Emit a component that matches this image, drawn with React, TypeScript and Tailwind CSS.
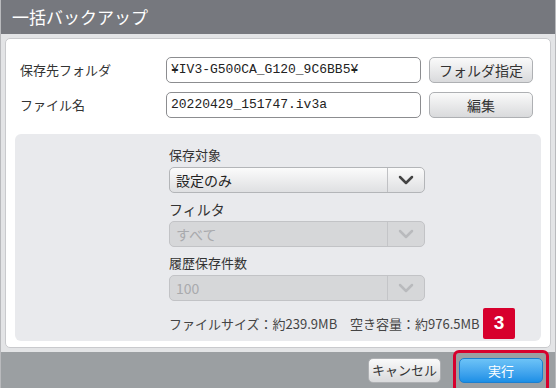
import React from 'react';

const jp = { fontFamily: '"Noto Sans CJK JP", "Noto Sans", sans-serif' };
const mono = { fontFamily: '"Liberation Mono", "Noto Sans CJK JP", monospace' };

const Chevron: React.FC<{ color: string }> = ({ color }) => (
  <svg width="16" height="10" viewBox="0 0 16 10" fill="none">
    <polyline points="2,2 8,8 14,2" stroke={color} strokeWidth="2.5" strokeLinecap="round" strokeLinejoin="round" />
  </svg>
);

interface SelectProps {
  value: string;
  disabled?: boolean;
}

const Select: React.FC<SelectProps> = ({ value, disabled }) => (
  <div
    className={
      disabled
        ? 'flex h-[26px] w-[256px] rounded-[5px] border border-[#c2c3c6] bg-[#d6d7d9] text-[#a9aaad]'
        : 'flex h-[26px] w-[256px] rounded-[5px] border border-[#b3b5b8] bg-gradient-to-b from-[#fbfbfb] to-[#dfe0e2] text-[#222]'
    }
  >
    <div className="flex-1 flex items-center pl-[6px] text-[14px]">{value}</div>
    <div
      className={
        disabled
          ? 'w-[37px] flex items-center justify-center border-l border-[#c4c5c8]'
          : 'w-[37px] flex items-center justify-center border-l border-[#c0c1c4]'
      }
    >
      <Chevron color={disabled ? '#b9babd' : '#444'} />
    </div>
  </div>
);

const GrayButton: React.FC<{ label: string; className: string }> = ({ label, className }) => (
  <button
    className={
      'flex items-center justify-center rounded-[5px] border border-[#aeb0b3] bg-gradient-to-b from-[#fafafa] to-[#d9dadc] text-[#333] ' +
      className
    }
  >
    {label}
  </button>
);

export default function App() {
  return (
    <div className="w-[556px] h-[388px] flex flex-col overflow-hidden bg-[#e3e4e6] border-x border-[#b9babd]" style={jp}>
      {/* Title bar */}
      <div className="h-[34px] bg-[#76787e] flex items-center pl-[11px] text-white text-[17px]">
        一括バックアップ
      </div>

      {/* Body */}
      <div className="flex-1 px-[4px] pt-[4px] pb-[4px]">
        <div className="h-full rounded-[5px] border border-[#c9cacd] bg-white px-[9px] pt-[18px] pb-[6px] flex flex-col">
          <div className="flex items-center h-[26px] pl-[5px] text-[13px] text-[#333]">
            <div className="w-[146px]">保存先フォルダ</div>
            <div className="w-[255px] h-[26px] rounded-[5px] border border-[#8c8d90] flex items-center pl-[4px] text-[13px] text-[#222]" style={mono}>
              ¥IV3-G500CA_G120_9C6BB5¥
            </div>
            <GrayButton label="フォルダ指定" className="ml-[8px] w-[104px] h-[26px] text-[14px]" />
          </div>
          <div className="flex items-center h-[26px] mt-[9px] pl-[5px] text-[13px] text-[#333]">
            <div className="w-[146px]">ファイル名</div>
            <div className="w-[255px] h-[26px] rounded-[5px] border border-[#8c8d90] flex items-center pl-[4px] text-[13px] text-[#222]" style={mono}>
              20220429_151747.iv3a
            </div>
            <GrayButton label="編集" className="ml-[8px] w-[104px] h-[26px] text-[14px]" />
          </div>

          {/* Options panel */}
          <div className="flex-1 mt-[16px] rounded-[6px] bg-[#e9eaed] pl-[154px] pt-[11px] pb-[2px] text-[#333]">
            <div className="h-[20px] leading-[20px] text-[13px]">保存対象</div>
            <div className="mt-[2px]"><Select value="設定のみ" /></div>
            <div className="mt-[6px] h-[20px] leading-[20px] text-[14px]">フィルタ</div>
            <div className="mt-[2px]"><Select value="すべて" disabled /></div>
            <div className="mt-[6px] h-[20px] leading-[20px] text-[13px]">履歴保存件数</div>
            <div className="mt-[2px]"><Select value="100" disabled /></div>
            <div className="mt-[7px] h-[31px] flex items-center text-[13px] text-[#444]">
              <span className="w-[181px]">ファイルサイズ：約239.9MB</span>
              <span className="w-[133px]">空き容量：約976.5MB</span>
              <span className="w-[32px] h-[31px] rounded-[2px] bg-[#d7002d] text-white text-[19px] font-bold flex items-center justify-center" style={{ fontFamily: '"Liberation Sans", sans-serif' }}>
                3
              </span>
            </div>
          </div>
        </div>
      </div>

      {/* Footer */}
      <div className="h-[36px] bg-[#9b9fa2] flex items-center justify-end pr-[12px] gap-[18px]">
        <GrayButton label="キャンセル" className="w-[73px] h-[25px] text-[13px]" />
        <div className="relative">
          <button className="w-[84px] h-[25px] rounded-[5px] border border-[#1b7fd0] bg-gradient-to-b from-[#6cc3f7] to-[#1a8fe6] text-white text-[13px]">
            実行
          </button>
          <span className="absolute -left-[6px] -right-[6px] -top-[7px] -bottom-[10px] rounded-[6px] border-[3px] border-[#d7002d]" />
        </div>
      </div>
    </div>
  );
}
